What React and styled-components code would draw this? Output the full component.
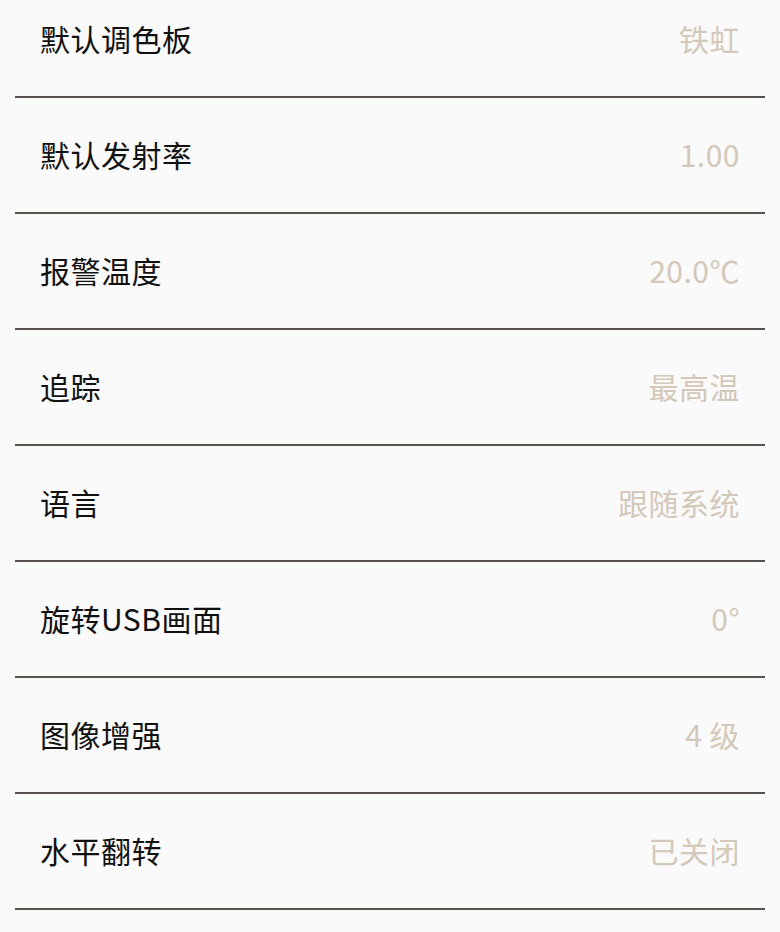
import styled, { createGlobalStyle } from 'styled-components';

const GlobalStyle = createGlobalStyle`
  html, body {
    margin: 0;
    padding: 0;
    background: #fafafa;
    overflow: hidden;
  }
  body {
    font-family: "Noto Sans CJK SC", "Noto Sans", sans-serif;
  }
`;

const settings = [
  { label: '默认调色板', value: '铁虹' },
  { label: '默认发射率', value: '1.00' },
  { label: '报警温度', value: '20.0℃' },
  { label: '追踪', value: '最高温' },
  { label: '语言', value: '跟随系统' },
  { label: '旋转USB画面', value: '0°' },
  { label: '图像增强', value: '4 级' },
  { label: '水平翻转', value: '已关闭' },
];

export default function App() {
  return (
    <>
      <GlobalStyle />
      <List>
        {settings.map((item) => (
          <Item key={item.label}>
            <Row>
              <Label>{item.label}</Label>
              <Value>{item.value}</Value>
            </Row>
            <Divider />
          </Item>
        ))}
      </List>
    </>
  );
}

const List = styled.div`
  display: flex;
  flex-direction: column;
  margin-top: -18px;
  width: 780px;
`;

const Item = styled.div`
  display: flex;
  flex-direction: column;
`;

const Row = styled.div`
  box-sizing: border-box;
  display: flex;
  align-items: center;
  justify-content: space-between;
  height: 114px;
  padding: 0 40px 3px;
`;

const Label = styled.span`
  font-size: 30px;
  color: #111111;
  letter-spacing: 0.5px;
`;

const Value = styled.span`
  font-size: 30px;
  color: #d3c8b9;
  letter-spacing: 0.5px;
`;

const Divider = styled.div`
  height: 2px;
  margin: 0 15px;
  background: #57524b;
`;
